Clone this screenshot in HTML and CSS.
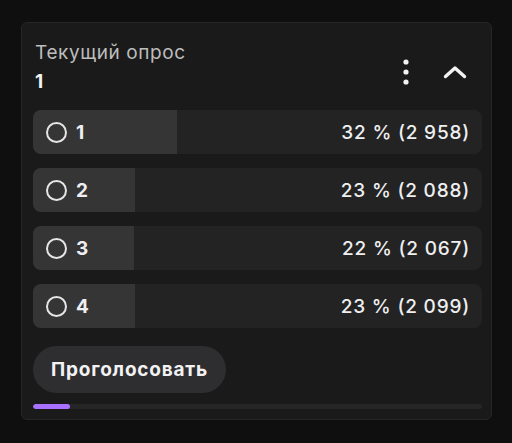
FILE: index.html
```html
<!DOCTYPE html>
<html lang="ru">
<head>
<meta charset="utf-8">
<link rel="stylesheet" href="styles.css">
</head>
<body>
<section class="panel">
  <header class="head">
    <div class="titles">
      <div class="title">Текущий опрос</div>
      <div class="name">1</div>
    </div>
    <div class="actions">
      <svg class="kebab" width="8" height="26" viewBox="0 0 8 26"><circle cx="4" cy="3" r="2.6"/><circle cx="4" cy="13" r="2.6"/><circle cx="4" cy="23" r="2.6"/></svg>
      <svg class="chev" width="24" height="14" viewBox="0 0 24 14"><path d="M2.5 11.5 L12 3 L21.5 11.5" fill="none" stroke-width="3.4" stroke-linecap="round" stroke-linejoin="round"/></svg>
    </div>
  </header>
  <ul class="options">
    <li class="opt"><span class="fill" style="width:32.1%"></span><span class="radio"></span><span class="label">1</span><span class="pct">32 % (2 958)</span></li>
    <li class="opt"><span class="fill" style="width:22.7%"></span><span class="radio"></span><span class="label">2</span><span class="pct">23 % (2 088)</span></li>
    <li class="opt"><span class="fill" style="width:22.4%"></span><span class="radio"></span><span class="label">3</span><span class="pct">22 % (2 067)</span></li>
    <li class="opt"><span class="fill" style="width:22.8%"></span><span class="radio"></span><span class="label">4</span><span class="pct">23 % (2 099)</span></li>
  </ul>
  <button class="vote">Проголосовать</button>
  <div class="progress"><span class="bar" style="width:8.3%"></span></div>
</section>
</body>
</html>
```

FILE: styles.css
```css
html, body {
  margin: 0;
  padding: 0;
  background: #0f0f0f;
  font-family: Inter, "Noto Sans", sans-serif;
  color: #efeff1;
}
body {
  width: 512px;
  height: 443px;
  overflow: hidden;
}
.panel {
  box-sizing: border-box;
  margin: 22px 0 0 21px;
  width: 471px;
  height: 398px;
  background: #1a1a1a;
  border: 1px solid #262626;
  border-radius: 6px;
  padding: 14px 9px 0 11px;
  display: flex;
  flex-direction: column;
}
.head {
  display: flex;
  justify-content: space-between;
  align-items: center;
  padding-left: 2px;
  height: 64px;
  margin-bottom: 9px;
}
.titles {
  margin-top: -4px;
}
.title {
  font-size: 19px;
  line-height: 26px;
  letter-spacing: 0.6px;
  color: #bdbdbd;
}
.name {
  margin-top: 4px;
  font-size: 19px;
  font-weight: 700;
  line-height: 24px;
  color: #f2f2f2;
}
.actions {
  display: flex;
  align-items: center;
  gap: 33px;
  padding-right: 15px;
  margin-top: 6px;
}
.kebab { fill: #f2f2f2; }
.chev { stroke: #f2f2f2; }
.options {
  list-style: none;
  margin: 0;
  padding: 0;
  display: flex;
  flex-direction: column;
  gap: 14px;
}
.opt {
  position: relative;
  height: 44px;
  border-radius: 8px;
  background: #232323;
  overflow: hidden;
  display: flex;
  align-items: center;
  padding: 0 12px 0 13px;
}
.fill {
  position: absolute;
  left: 0;
  top: 0;
  bottom: 0;
  background: #353535;
}
.radio {
  position: relative;
  box-sizing: border-box;
  width: 21px;
  height: 21px;
  border: 2.7px solid #e6e6e6;
  border-radius: 50%;
  flex: none;
}
.label {
  position: relative;
  margin-left: 9px;
  font-size: 19px;
  font-weight: 700;
}
.pct {
  position: relative;
  margin-left: auto;
  font-size: 19px;
  font-weight: 500;
  letter-spacing: 0.8px;
}
.vote {
  align-self: flex-start;
  margin-top: 18px;
  height: 47px;
  padding: 0 18px;
  border: none;
  border-radius: 24px;
  background: #2e2e31;
  color: #f2f2f2;
  font-family: Inter, "Noto Sans", sans-serif;
  font-size: 19px;
  font-weight: 700;
  letter-spacing: 0.8px;
}
.progress {
  margin-top: 11px;
  height: 5px;
  border-radius: 3px;
  background: #262626;
  overflow: hidden;
}
.bar {
  display: block;
  height: 100%;
  background: #a970ff;
  border-radius: 3px;
}
```
